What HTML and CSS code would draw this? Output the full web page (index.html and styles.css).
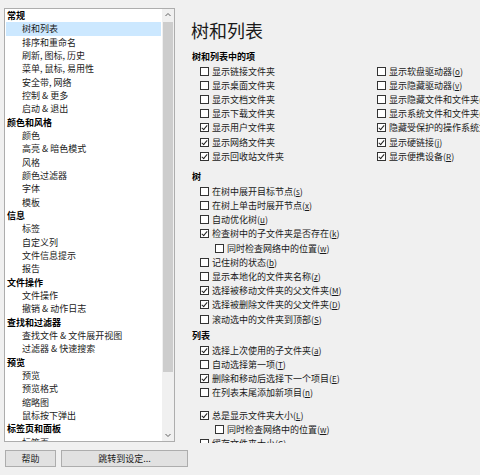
FILE: index.html
```html
<!DOCTYPE html>
<html lang="zh-CN">
<head>
  <meta charset="UTF-8">
  <title>设置 - 树和列表</title>
  <link rel="stylesheet" href="styles.css">
</head>
<body>
  <div class="window">
    <div class="main">
      <!-- 左侧分类树 -->
      <div class="nav">
        <ul class="tree">
          <li class="cat">常规</li>
          <li class="sub selected">树和列表</li>
          <li class="sub">排序和重命名</li>
          <li class="sub">刷新, 图标, 历史</li>
          <li class="sub">菜单, 鼠标, 易用性</li>
          <li class="sub">安全带, 网络</li>
          <li class="sub">控制 &amp; 更多</li>
          <li class="sub">启动 &amp; 退出</li>
          <li class="cat">颜色和风格</li>
          <li class="sub">颜色</li>
          <li class="sub">高亮 &amp; 暗色模式</li>
          <li class="sub">风格</li>
          <li class="sub">颜色过滤器</li>
          <li class="sub">字体</li>
          <li class="sub">模板</li>
          <li class="cat">信息</li>
          <li class="sub">标签</li>
          <li class="sub">自定义列</li>
          <li class="sub">文件信息提示</li>
          <li class="sub">报告</li>
          <li class="cat">文件操作</li>
          <li class="sub">文件操作</li>
          <li class="sub">撤销 &amp; 动作日志</li>
          <li class="cat">查找和过滤器</li>
          <li class="sub">查找文件 &amp; 文件展开视图</li>
          <li class="sub">过滤器 &amp; 快速搜索</li>
          <li class="cat">预览</li>
          <li class="sub">预览</li>
          <li class="sub">预览格式</li>
          <li class="sub">缩略图</li>
          <li class="sub">鼠标按下弹出</li>
          <li class="cat">标签页和面板</li>
          <li class="sub">标签页</li>
        </ul>
        <div class="scrollbar">
          <svg class="arrow" width="12" height="12" viewBox="0 0 12 12"><polyline points="3.5,7 6,4.5 8.5,7" fill="none" stroke="#606060" stroke-width="1"/></svg>
          <div class="track"><div class="thumb"></div></div>
          <svg class="arrow" width="12" height="12" viewBox="0 0 12 12"><polyline points="3.5,5 6,7.5 8.5,5" fill="none" stroke="#606060" stroke-width="1"/></svg>
        </div>
      </div>

      <!-- 右侧设置页 -->
      <div class="page">
        <h1>树和列表</h1>

        <div class="group">
          <div class="group-title">树和列表中的项</div>
          <div class="columns">
            <div class="col">
              <label class="opt"><span class="box"></span>显示链接文件夹</label>
              <label class="opt"><span class="box"></span>显示桌面文件夹</label>
              <label class="opt"><span class="box"></span>显示文档文件夹</label>
              <label class="opt"><span class="box"></span>显示下载文件夹</label>
              <label class="opt"><span class="box checked"></span>显示用户文件夹</label>
              <label class="opt"><span class="box checked"></span>显示网络文件夹</label>
              <label class="opt"><span class="box checked"></span>显示回收站文件夹</label>
            </div>
            <div class="col">
              <label class="opt"><span class="box"></span>显示软盘驱动器(<u>o</u>)</label>
              <label class="opt"><span class="box"></span>显示隐藏驱动器(<u>v</u>)</label>
              <label class="opt"><span class="box"></span>显示隐藏文件和文件夹(<u>h</u>)</label>
              <label class="opt"><span class="box"></span>显示系统文件和文件夹(<u>y</u>)</label>
              <label class="opt"><span class="box checked"></span>隐藏受保护的操作系统文件(<u>P</u>)</label>
              <label class="opt"><span class="box checked"></span>显示硬链接(<u>j</u>)</label>
              <label class="opt"><span class="box checked"></span>显示便携设备(<u>R</u>)</label>
            </div>
          </div>
        </div>

        <div class="group">
          <div class="group-title">树</div>
          <label class="opt"><span class="box"></span>在树中展开目标节点(<u>s</u>)</label>
          <label class="opt"><span class="box"></span>在树上单击时展开节点(<u>x</u>)</label>
          <label class="opt"><span class="box"></span>自动优化树(<u>u</u>)</label>
          <label class="opt"><span class="box checked"></span>检查树中的子文件夹是否存在(<u>k</u>)</label>
          <label class="opt child"><span class="box"></span>同时检查网络中的位置(<u>w</u>)</label>
          <label class="opt"><span class="box"></span>记住树的状态(<u>b</u>)</label>
          <label class="opt"><span class="box"></span>显示本地化的文件夹名称(<u>z</u>)</label>
          <label class="opt"><span class="box checked"></span>选择被移动文件夹的父文件夹(<u>M</u>)</label>
          <label class="opt"><span class="box checked"></span>选择被删除文件夹的父文件夹(<u>D</u>)</label>
          <label class="opt"><span class="box"></span>滚动选中的文件夹到顶部(<u>S</u>)</label>
        </div>

        <div class="group list-group">
          <div class="group-title">列表</div>
          <label class="opt"><span class="box checked"></span>选择上次使用的子文件夹(<u>a</u>)</label>
          <label class="opt"><span class="box"></span>自动选择第一项(<u>T</u>)</label>
          <label class="opt"><span class="box checked"></span>删除和移动后选择下一个项目(<u>E</u>)</label>
          <label class="opt"><span class="box"></span>在列表末尾添加新项目(<u>n</u>)</label>
          <div class="spacer"></div>
          <label class="opt"><span class="box checked"></span>总是显示文件夹大小(<u>L</u>)</label>
          <label class="opt child"><span class="box"></span>同时检查网络中的位置(<u>w</u>)</label>
          <label class="opt"><span class="box"></span>缓存文件夹大小(<u>C</u>)</label>
        </div>
      </div>
    </div>

    <div class="footer">
      <button class="btn help">帮助</button>
      <button class="btn jump">跳转到设定...</button>
    </div>
  </div>
</body>
</html>
```

FILE: styles.css
```css
body {
  margin: 0;
  background-color: #f0f0f0;
  font-family: "Noto Sans CJK SC", "Noto Sans", sans-serif;
  font-size: 9px;
  color: #1a1a1a;
}
.window {
  width: 480px;
  height: 475px;
  overflow: hidden;
  padding-top: 8px;
  box-sizing: border-box;
}
.main {
  display: flex;
  height: 435px;
}

/* left tree */
.nav {
  display: flex;
  flex-shrink: 0;
  margin-left: 4px;
  width: 171px;
  height: 434px;
  box-sizing: border-box;
  border: 1px solid #adadad;
  background-color: white;
}
.tree {
  flex: 1;
  list-style: none;
  margin: 0;
  padding: 0;
  overflow: hidden;
}
.tree li {
  height: 13.33px;
  line-height: 13.33px;
  white-space: nowrap;
  margin: 0 1px;
}
.tree .cat {
  font-weight: bold;
  padding-left: 1px;
  color: #000;
}
.tree .sub {
  padding-left: 16px;
}
.tree .selected {
  background-color: #cce8ff;
}
.scrollbar {
  width: 12px;
  display: flex;
  flex-direction: column;
  background-color: #f0f0f0;
}
.arrow {
  display: block;
}
.track {
  flex: 1;
  padding: 1px 1px 0 1px;
}
.thumb {
  height: 350px;
  background-color: #cdcdcd;
}

/* right page */
.page {
  flex: 1;
  padding-left: 17px;
  overflow: hidden;
  white-space: nowrap;
}
h1 {
  font-size: 18px;
  font-weight: normal;
  margin: 9px 0 0 -1px;
  line-height: 26px;
  color: #1a1a1a;
}
.group {
  margin-top: 7px;
}
.list-group {
  margin-top: 3px;
}
.group-title {
  font-weight: bold;
  height: 14px;
  line-height: 14px;
  color: #000;
}
.columns {
  display: flex;
}
.col {
  width: 177px;
  flex-shrink: 0;
}
.opt {
  display: flex;
  align-items: center;
  height: 14.2px;
  padding-left: 8px;
}
.opt.child {
  padding-left: 23px;
}
.opt u {
  font-size: 8px;
}
.box {
  width: 9px;
  height: 9px;
  box-sizing: border-box;
  border: 1px solid #333;
  background-color: white;
  margin-right: 3px;
  flex-shrink: 0;
  position: relative;
}
.box.checked::after {
  content: "";
  position: absolute;
  left: 2px;
  top: 0px;
  width: 2px;
  height: 5px;
  border-right: 1px solid #222;
  border-bottom: 1px solid #222;
  transform: rotate(40deg);
}
.spacer {
  height: 8px;
}

/* bottom buttons */
.footer {
  display: flex;
  gap: 5px;
  padding-left: 5px;
  margin-top: 7px;
}
.btn {
  height: 17px;
  padding: 0;
  font-family: inherit;
  font-size: 9px;
  color: #1a1a1a;
  background-color: #e1e1e1;
  border: 1px solid #adadad;
}
.help {
  width: 51px;
}
.jump {
  width: 127px;
}
```
